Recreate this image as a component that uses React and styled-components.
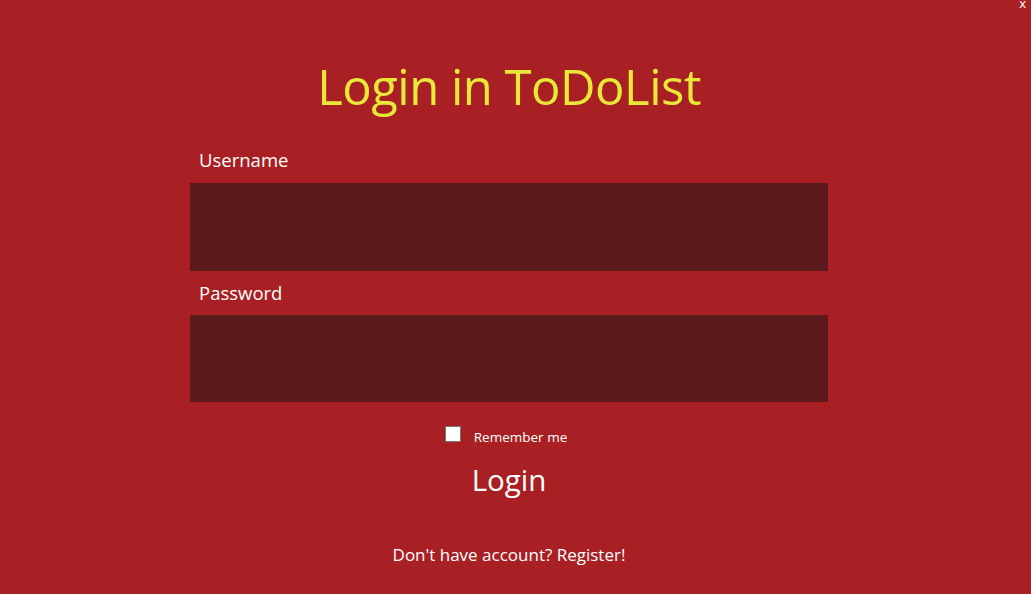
import React from 'react'
import styled, { createGlobalStyle } from 'styled-components'

const Global = createGlobalStyle`
    html, body {
        margin: 0;
        padding: 0;
        background: #a82023;
        font-family: "Open Sans", "Noto Sans", sans-serif;
    }
`

const Page = styled.div`
    position: relative;
    width: 1031px;
    height: 594px;
    box-sizing: border-box;
    padding-right: 13px;
    background: #a82023;
    display: flex;
    flex-direction: column;
    align-items: center;
    overflow: hidden;
`

const Close = styled.span`
    position: absolute;
    top: 0;
    right: 5px;
    color: #fff;
    font-size: 13px;
    line-height: 7px;
`

const Title = styled.h1`
    margin: 54px 0 0;
    font-size: 49px;
    font-weight: 400;
    color: #e8e838;
    letter-spacing: -0.5px;
    line-height: 64px;
`

const Form = styled.form`
    width: 638px;
    display: flex;
    flex-direction: column;
`

const Label = styled.label`
    color: #fff;
    font-size: 18.5px;
    padding-left: 9px;
    line-height: 24px;
    margin-top: ${(props) => props.top}px;
    margin-bottom: ${(props) => props.bottom}px;
`

const Input = styled.input`
    height: ${(props) => props.h}px;
    border: none;
    outline: none;
    background: #5d1a1d;
    color: #fff;
    padding: 0 10px;
    box-sizing: border-box;
`

const RememberRow = styled.div`
    display: flex;
    align-items: flex-end;
    justify-content: center;
    gap: 13px;
    margin-top: 24px;
    margin-right: 6px;
`

const Check = styled.input`
    width: 16px;
    height: 16px;
    margin: 0 0 3px;
    appearance: none;
    background: #fff;
    border: 1px solid #777;
    box-sizing: border-box;
`

const RememberText = styled.span`
    color: #fff;
    font-size: 13.5px;
    line-height: 16px;
`

const LoginButton = styled.button`
    align-self: center;
    margin-top: 15px;
    background: none;
    border: none;
    color: #fff;
    font-family: inherit;
    font-size: 29.5px;
    line-height: 40px;
    padding: 0;
    cursor: pointer;
`

const Footer = styled.p`
    margin: 43px 0 0;
    text-align: center;
    color: #fff;
    font-size: 17px;
    line-height: 24px;
`

export default () => {
    return (
        <>
            <Global />
            <Page>
                <Close>x</Close>
                <Title>Login in ToDoList</Title>
                <Form onSubmit={(e) => e.preventDefault()}>
                    <Label top={30} bottom={11}>Username</Label>
                    <Input h={88} type="text" />
                    <Label top={10} bottom={10}>Password</Label>
                    <Input h={87} type="password" />
                    <RememberRow>
                        <Check type="checkbox" />
                        <RememberText>Remember me</RememberText>
                    </RememberRow>
                    <LoginButton type="submit">Login</LoginButton>
                    <Footer>Don't have account? Register!</Footer>
                </Form>
            </Page>
        </>
    )
}
